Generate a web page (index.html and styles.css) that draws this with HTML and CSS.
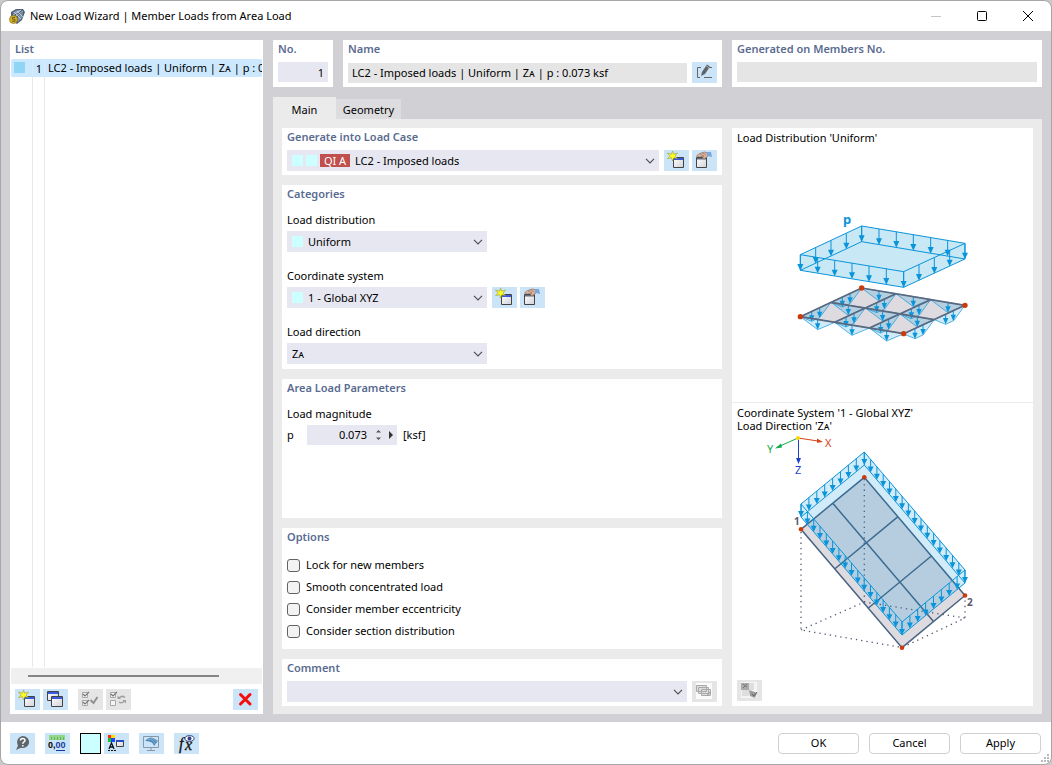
FILE: index.html
```html
<!DOCTYPE html>
<html lang="en">
<head>
<meta charset="utf-8">
<title>New Load Wizard | Member Loads from Area Load</title>
<link rel="stylesheet" href="styles.css">
</head>
<body>
<svg class="defs" aria-hidden="true">
  <defs>
    <linearGradient id="face" x1="0" y1="0" x2="1" y2="1"><stop offset="0" stop-color="#fff"/><stop offset="1" stop-color="#d2d2d8"/></linearGradient>
    <symbol id="i-new" viewBox="0 0 25 21">
      <path d="M9.500 7.500h10v10h-10z" fill="url(#face)" stroke="#444"/>
      <path d="M10 8h9v2h-9z" fill="#3a5ae0"/>
      <path d="M8.500 1l1.200 3.200 3.800-1.200-2.500 3 2.500 2.500-3.600-.8-1.400 3.300-1-3.300-4 1 2.700-2.700-2.700-3 4 1.200z" fill="#ffff1e" stroke="#98983a" stroke-width=".6"/>
    </symbol>
    <symbol id="i-copy" viewBox="0 0 25 21">
      <path d="M4.500 2.500h11v9h-11z" fill="url(#face)" stroke="#444"/><path d="M5 3h10v2H5z" fill="#3a5ae0"/>
      <path d="M8.500 7.500h11v10h-11z" fill="url(#face)" stroke="#444"/><path d="M9 8h10v2H9z" fill="#3a5ae0"/>
    </symbol>
    <symbol id="i-edit" viewBox="0 0 25 21">
      <path d="M4.500 7.500h10v10h-10z" fill="url(#face)" stroke="#444"/><path d="M5 8h9v1.500H5z" fill="#666b80"/>
      <path d="M4.500 6l3-2.500 5-1.500 3.500 1v3l-4 3-1.500-1 1-2-4 1z" fill="#dcb49c" stroke="#8b6f62" stroke-width=".7"/>
      <path d="M8 4l4 2M10.500 3l3.500 2" stroke="#8b6f62" stroke-width=".6"/>
      <path d="M15 2h4l1 5-4.500-1z" fill="#79a7e3"/>
    </symbol>
    <symbol id="chev" viewBox="0 0 10 6"><path d="M1 .8l4 4 4-4" fill="none" stroke="#505058" stroke-width="1.200"/></symbol>
    <marker id="m-long" markerUnits="userSpaceOnUse" viewBox="-10 0 20 50" refX="0" refY="0" markerWidth="20" markerHeight="50" overflow="visible"><path d="M0 0v30" stroke="#0a94da" stroke-width="3"/><path d="M-9 28H9L0 48z" fill="#0a94da"/></marker>
    <marker id="m-mid" markerUnits="userSpaceOnUse" viewBox="-10 0 20 50" refX="0" refY="0" markerWidth="20" markerHeight="50" overflow="visible"><path d="M0 0v14" stroke="#0a94da" stroke-width="3"/><path d="M-8 12H8L0 31z" fill="#0a94da"/></marker>
    <marker id="m-short" markerUnits="userSpaceOnUse" viewBox="-3 0 6 14" refX="0" refY="0" markerWidth="6" markerHeight="14" overflow="visible"><path d="M0 0v9" stroke="#0a94da"/><path d="M-3 7h6L0 13z" fill="#0a94da"/></marker>
    <path id="tri" d="M0 0L52 39 104 17z"/>
    <path id="trap" d="M0 0L-34 46-58 57-92 43z"/>
  </defs>
</svg>

<main class="window">
  <header class="titlebar">
    <svg class="appicon" viewBox="0 0 16 16" aria-hidden="true">
      <path d="M2 4l5-3 7 0 2 3-3 8-5 4-6-4z" fill="#4d6077"/><path d="M3 5l5-3 5 0-5 4zM9 8l5-4-1 6-4 4z" fill="#7f93ab"/><path d="M4 7l8-5M7 8l7-5M8 3l6 6M5 4l7 7" stroke="#c9d4e0" stroke-width=".8"/>
      <circle cx="4.500" cy="11.500" r="4" fill="#d6b22b" stroke="#8c7420" stroke-width=".7"/><path d="M6 9.500H3.500v1.800H6v2H3" fill="none" stroke="#745e13"/>
    </svg>
    <h1>New Load Wizard | Member Loads from Area Load</h1>
    <button class="winbtn" aria-label="Minimize" disabled><svg viewBox="0 0 12 12"><path d="M1 6.500h10" stroke="#c4c4c4"/></svg></button>
    <button class="winbtn" aria-label="Maximize"><svg viewBox="0 0 12 12"><rect x="1.500" y="1.500" width="9" height="9" rx="1" fill="none" stroke="#000"/></svg></button>
    <button class="winbtn" aria-label="Close"><svg viewBox="0 0 12 12"><path d="M1 1l10 10M11 1L1 11" stroke="#000"/></svg></button>
  </header>

  <div class="workspace">
    <section class="card list">
      <h2>List</h2>
      <ul class="rows">
        <li class="row"><span class="cell"><i class="mark"></i></span><span class="cell num">1</span><span class="name">LC2 - Imposed loads | Uniform | Zᴀ | p : 0.073 ksf</span></li>
      </ul>
      <div class="scroll"><div class="thumb"></div></div>
      <div class="tools">
        <button class="tool" aria-label="New"><svg><use href="#i-new"/></svg></button>
        <button class="tool" aria-label="Copy"><svg><use href="#i-copy"/></svg></button>
        <button class="tool spaced" aria-label="Select all" disabled><svg viewBox="0 0 25 21"><path d="M4.500 3.500h5v5h-5zM4.500 11.500h5v5h-5z" fill="#f5f5f5" stroke="#a8a8a8"/><path d="M5 5l2 2 4-4M5 13l2 2 4-4" fill="none" stroke="#777" stroke-width="1.200"/><path d="M12.500 11l3 3 4-6" fill="none" stroke="#909090" stroke-width="2"/></svg></button>
        <button class="tool" aria-label="Invert selection" disabled><svg viewBox="0 0 25 21"><path d="M4.500 3.500h5v5h-5zM4.500 11.500h5v5h-5z" fill="#f5f5f5" stroke="#a8a8a8"/><path d="M5 5l2 2 4-4" fill="none" stroke="#777" stroke-width="1.200"/><path d="M13 9q3-3 6-.5M18.500 12q-3 3-5.500 1" fill="none" stroke="#a0a0a0" stroke-width="1.500"/><path d="M11.500 6.500v3.500h3.500zM20 14.500v-3.500h-3.500z" fill="#a0a0a0"/></svg></button>
        <button class="tool last" aria-label="Delete"><svg viewBox="0 0 25 21"><path d="M7.500 5.500L17 15M17 5.500L7.500 15" stroke="#f50c0c" stroke-width="3" stroke-linecap="round"/></svg></button>
      </div>
    </section>

    <div class="detail">
      <div class="top">
        <section class="card"><h2><label for="no">No.</label></h2><input id="no" class="field right" value="1"></section>
        <section class="card"><h2><label for="name">Name</label></h2>
          <div class="line"><input id="name" class="field gray" readonly value="LC2 - Imposed loads | Uniform | Zᴀ | p : 0.073 ksf">
            <button class="tool" aria-label="Edit name"><svg viewBox="0 0 25 21"><path d="M9 5.500H5.500v10H8M12 15.500h8M17 5.500h3" fill="none" stroke="#666"/><path d="M9 14l1-4 4-6 3 2-4 6z" fill="#5e6468"/><path d="M14.500 3l3 2" stroke="#5e6468" stroke-width="1.500"/></svg></button></div>
        </section>
        <section class="card"><h2><label for="gen">Generated on Members No.</label></h2><input id="gen" class="field gray" readonly></section>
      </div>

      <nav class="tabs"><button class="tab active">Main</button><button class="tab">Geometry</button></nav>

      <div class="page">
        <div class="forms">
          <section class="card"><h2><label for="lc">Generate into Load Case</label></h2>
            <div class="line">
              <div class="combo"><i class="swatch"></i><i class="swatch"></i><span class="badge">QI A</span><select id="lc"><option>LC2 - Imposed loads</option></select><svg class="chev"><use href="#chev"/></svg></div>
              <button class="tool" aria-label="New load case"><svg><use href="#i-new"/></svg></button>
              <button class="tool" aria-label="Edit load case"><svg><use href="#i-edit"/></svg></button>
            </div>
          </section>

          <section class="card"><h2>Categories</h2>
            <div class="stack">
              <div class="item"><label for="dist">Load distribution</label><div class="combo fixed"><i class="swatch wide"></i><select id="dist"><option>Uniform</option></select><svg class="chev"><use href="#chev"/></svg></div></div>
              <div class="item"><label for="cs">Coordinate system</label>
                <div class="line"><div class="combo fixed"><i class="swatch wide"></i><select id="cs"><option>1 - Global XYZ</option></select><svg class="chev"><use href="#chev"/></svg></div>
                <button class="tool" aria-label="New coordinate system"><svg><use href="#i-new"/></svg></button>
                <button class="tool" aria-label="Edit coordinate system"><svg><use href="#i-edit"/></svg></button></div></div>
              <div class="item"><label for="dir">Load direction</label><div class="combo fixed"><select id="dir"><option>Zᴀ</option></select><svg class="chev"><use href="#chev"/></svg></div></div>
            </div>
          </section>

          <section class="card grow"><h2>Area Load Parameters</h2>
            <div class="stack"><div class="item"><span>Load magnitude</span>
              <div class="line param"><label for="p">p</label>
                <div class="spin"><input id="p" value="0.073"><svg viewBox="0 0 18 14" aria-hidden="true"><path d="M0 4.500h5L2.500 2zM0 9.500h5L2.500 12z" fill="#555"/><path d="M13 3v8l4-4z" fill="#333"/></svg></div>
                <span>[ksf]</span></div></div></div>
          </section>

          <section class="card"><h2>Options</h2>
            <div class="checks">
              <label><input type="checkbox">Lock for new members</label>
              <label><input type="checkbox">Smooth concentrated load</label>
              <label><input type="checkbox">Consider member eccentricity</label>
              <label><input type="checkbox">Consider section distribution</label>
            </div>
          </section>

          <section class="card"><h2><label for="com">Comment</label></h2>
            <div class="line"><div class="combo"><select id="com"><option></option></select><svg class="chev"><use href="#chev"/></svg></div>
              <button class="tool" aria-label="Comment library" disabled><svg viewBox="0 0 25 21"><path d="M4 2h16v16H4z" fill="#fafafa"/><path d="M4.500 4.500h10v6h-10zM6.500 6.500h10v6h-10zM9.500 8.500h9v6h-9z" fill="#ddd" stroke="#aaa"/><path d="M15 14.500l3.500-3.500" stroke="#888"/></svg></button></div>
          </section>
        </div>

        <aside class="preview">
          <figure class="pic first">
            <figcaption>Load Distribution 'Uniform'</figcaption>
            <svg class="dist" viewBox="737 205 291 150" role="img" aria-label="Uniform load on plate">
              <g transform="translate(780 205) scale(.3333)" stroke-linejoin="round">
                <path d="M245 63L555 115v47L371 247 61 196v-47z" fill="#c8e8f6"/>
                <g fill="none" stroke="#0a94da" stroke-width="3">
                  <path d="M245 63L555 115 371 200 61 149zM245 110L555 162 371 247 61 196zM245 63v47M555 115v47M371 200v47M61 149v47"/>
                  <path class="long" d="M245 63l52 9 52 8 51 9 52 9 51 8 52 9-46 21-46 22-46 21-46 21-52-9-52-8-51-9-52-8-51-9-52-8 46-21 46-22 46-21"/>
                </g>
                <path d="M245 249L555 301 371 386 61 335z" fill="#dddbe0"/>
                <g fill="#2ba4dc" fill-opacity=".22" stroke="#0a94da" stroke-width="2">
                  <use href="#tri" x="245" y="249"/><use href="#tri" x="348" y="266"/><use href="#tri" x="452" y="284"/>
                  <use href="#tri" x="153" y="292"/><use href="#tri" x="256" y="309"/><use href="#tri" x="360" y="327"/>
                  <use href="#tri" x="61" y="335"/><use href="#tri" x="164" y="352"/><use href="#tri" x="268" y="369"/>
                  <use href="#trap" x="245" y="249"/><use href="#trap" x="348" y="266"/><use href="#trap" x="452" y="284"/><use href="#trap" x="555" y="301"/>
                  <use href="#trap" x="153" y="292"/><use href="#trap" x="256" y="309"/><use href="#trap" x="360" y="327"/><use href="#trap" x="463" y="344"/>
                </g>
                <path class="mid" fill="none" d="M297 257l103 18 104 17M205 300l103 18 104 17M113 343l103 18 104 17M210 265l103 17 104 18 103 17M187 275l103 17 104 18 103 17M119 308l103 17 104 18 103 17M95 319l103 17 104 18 103 17"/>
                <path d="M245 249L555 301 371 386 61 335zM153 292L463 344M348 266L164 352M452 284L268 369" fill="none" stroke="#5a6880" stroke-width="5"/>
                <g fill="#cb3a0a"><circle cx="245" cy="249" r="8"/><circle cx="555" cy="301" r="8"/><circle cx="371" cy="386" r="8"/><circle cx="61" cy="335" r="8"/></g>
              </g>
              <text class="p" x="843" y="224">p</text>
            </svg>
          </figure>
          <figure class="pic second">
            <figcaption>Coordinate System '1 - Global XYZ'<br>Load Direction 'Zᴀ'</figcaption>
            <svg class="coord" viewBox="737 433 291 222" role="img" aria-label="Load in global Z direction">
              <path d="M864.300 477.300L965 595.500 902 647.700 801 529.300z" fill="#dddbe0"/>
              <g fill="none" stroke="#505870" stroke-width="1.300" stroke-dasharray="1.300 4"><path d="M801 532V630L902 647.500 965 618V596M801 630L864.300 602 965 618M864.300 479V602"/></g>
              <path d="M864.300 477.300L965 595.500 902 647.700 801 529.300zM833 503.500L933.500 621.500M898 516.700L834.600 569M931.400 556L868.400 608" fill="none" stroke="#4a6484" stroke-width="1.500"/>
              <path d="M864.300 452L965 570V583L902 635 801 517V504z" fill="#0091da" fill-opacity=".18"/>
              <g fill="none" stroke="#0a94da"><path d="M864.300 452L965 570 902 622 801 504zM864.300 465L965 583 902 635 801 517zM864.300 452v13M965 570v13M902 622v13M801 504v13"/>
                <path class="short" d="M864.300 452l6.300 7.400 6.300 7.300 6.300 7.400 6.300 7.400 6.300 7.400 6.300 7.300 6.300 7.400 6.300 7.400 6.300 7.400 6.300 7.300 6.300 7.400 6.300 7.400 6.300 7.400 6.300 7.300 6.300 7.400 6.200 7.400-7.900 6.500-7.900 6.500-7.800 6.500-7.900 6.500-7.900 6.500-7.900 6.500-7.800 6.500-7.900 6.500-6.300-7.400-6.300-7.400-6.300-7.300-6.300-7.400-6.300-7.400-6.300-7.400-6.400-7.300-6.300-7.400-6.300-7.400-6.300-7.400-6.300-7.300-6.300-7.400-6.300-7.400-6.300-7.400-6.300-7.300-6.400-7.400 7.900-6.500 7.900-6.500 7.900-6.500 7.900-6.500 7.900-6.500 7.900-6.500 7.900-6.500"/></g>
              <g fill="#cb3a0a"><circle cx="864.300" cy="477.300" r="2.300"/><circle cx="965" cy="595.500" r="2.300"/><circle cx="902" cy="647.700" r="2.300"/><circle cx="801" cy="529.300" r="2.300"/></g>
              <path d="M798 438l20 3" stroke="#d8421a"/><path d="M817 438.500l6 3.500-6 .8z" fill="#d8421a"/>
              <path d="M798 438l-18 8" stroke="#14a84c"/><path d="M781 443.500l-6 5 7-1z" fill="#14a84c"/>
              <path d="M798.500 438v20" stroke="#1c3fc8"/><path d="M796 458h5l-2.500 6z" fill="#1c3fc8"/><circle cx="798" cy="438" r="2" fill="#ffd800"/>
              <text class="axis x" x="825" y="447">X</text><text class="axis y" x="767" y="453">Y</text><text class="axis z" x="795" y="474">Z</text>
              <text class="node" x="794" y="525">1</text><text class="node" x="967" y="606">2</text>
            </svg>
            <button class="tool" aria-label="Switch picture" disabled><svg viewBox="0 0 25 21"><path d="M4 2h16v16H4z" fill="#f4f4f4"/><path d="M4 3h8v7H4z" fill="#aaa"/><path d="M12 3h5v7h-5zM5 10h7v6H5z" fill="#dedede"/><path d="M6 4l4 3M10 4L6 8" stroke="#777"/><path d="M12 10l3 1 5 2-2 5-5-2z" fill="#9a9a9a"/><path d="M15 14l2 2 3-4" fill="none" stroke="#666"/></svg></button>
          </figure>
        </aside>
      </div>
    </div>
  </div>

  <footer class="footer">
    <button class="tool" aria-label="Help"><svg viewBox="0 0 25 21"><path d="M12.500 3a6.500 6 0 1 1-1.500 11.800L6 17l2-4.500A6.300 6.300 0 0 1 12.500 3z" fill="#5f666b"/><path d="M10.500 7.500q0-2 2.200-2t2.300 1.800q0 1.200-1.300 1.800-.9.500-.9 1.700M12.800 12v1.600" fill="none" stroke="#fff" stroke-width="1.500"/></svg></button>
    <button class="tool" aria-label="Units"><svg viewBox="0 0 25 21"><path d="M4 2h16v5H4z" fill="#93d88a"/><path d="M6.500 4v3M9.500 4v3M12.500 4v3M15.500 4v3M18.500 4v3" stroke="#5da858" stroke-width=".8"/><text class="digits" x="3" y="15">0,<tspan fill="#153c9c">00</tspan></text><path d="M11 17.500h9" stroke="#153c9c"/></svg></button>
    <button class="color" aria-label="Color"></button>
    <button class="tool tight" aria-label="Display properties"><svg viewBox="0 0 25 21"><path d="M4 2h3v3H4z" fill="#f22"/><path d="M7 2h4v3H7z" fill="#fd0"/><path d="M4 5h3v4H4z" fill="#13c22e"/><path d="M7 5h4v4H7z" fill="#24f"/><path d="M5 16l2.500-6 2.500 6M6 14h3" fill="none" stroke="#111" stroke-width="1.300"/><path d="M4 17.500h8" stroke="#111" stroke-dasharray="2 1"/><path d="M12.500 7.500h7v6h-7z" fill="url(#face)" stroke="#444"/><path d="M12 7h8v2h-8z" fill="#2b4bbb"/></svg></button>
    <button class="tool" aria-label="View"><svg viewBox="0 0 25 21"><path d="M4.500 3.500h15v11h-15zM12 14.500v3M8 17.500h8" fill="none" stroke="#8798a8"/><path d="M6 8q5-6 10-2l3 2-4 5q-1-5-9-5z" fill="#4f86b8"/><path d="M9 6q5 0 7 5M12 5q3 1 6 4" fill="none" stroke="#9cc4e2" stroke-width=".7"/></svg></button>
    <button class="tool" aria-label="Formula"><svg viewBox="0 0 25 21"><text class="fx" x="5" y="16">f</text><text class="fx" x="11" y="17">x</text><ellipse cx="15.500" cy="5.500" rx="4.500" ry="2.800" fill="#fff" stroke="#28356c"/><circle cx="15.500" cy="5.500" r="2" fill="#34408c"/></svg></button>
    <div class="actions"><button class="push">OK</button><button class="push">Cancel</button><button class="push">Apply</button></div>
    <svg class="grip" viewBox="0 0 9 9" aria-hidden="true"><path d="M6 0h2v2H6zM3 3h2v2H3zM6 3h2v2H6zM0 6h2v2H0zM3 6h2v2H3zM6 6h2v2H6z" fill="#b9b9b9"/></svg>
  </footer>
</main>
</body>
</html>
```
FILE: styles.css
```css
* { box-sizing: border-box; }
body { margin: 0; background: #c9c9c9; color: #000; font: 11px/16px "Noto Sans", "Open Sans", sans-serif; }
h1, h2, ul, figure { margin: 0; padding: 0; }
button, input, select { font: inherit; color: inherit; margin: 0; padding: 0; border: 0; background: none; }
svg { display: block; flex: none; }
.defs { position: absolute; width: 0; height: 0; }

.window { display: flex; flex-direction: column; min-height: 100vh; border: 1px solid #a6a6a6; border-radius: 8px; background: #fff; overflow: hidden; }
.titlebar { display: flex; align-items: center; height: 30px; padding-left: 8px; }
.titlebar h1 { flex: 1; margin-left: 5px; font-size: 11px; font-weight: 400; }
.appicon { width: 16px; height: 16px; }
.winbtn { display: grid; place-items: center; width: 46px; height: 30px; }
.winbtn svg { width: 12px; height: 12px; }

.workspace { flex: 1; display: grid; grid-template-columns: 253px 1fr; gap: 10px; padding: 9px 9px 8px; background: #d1d0d5; }
.card { min-width: 0; padding: 0 5px 4px; background: #fff; }
h2 { height: 18px; margin-bottom: 4px; font-size: 11px; line-height: 18px; font-weight: 600; color: #5a6b91; white-space: nowrap; }

.list { display: flex; flex-direction: column; padding: 0 1px 4px; }
.list h2 { margin: 0 4px 1px; }
.rows { flex: 1; list-style: none; background: linear-gradient(#e8e8e8, #e8e8e8) 21px 0 / 1px 100% no-repeat, linear-gradient(#e8e8e8, #e8e8e8) 33px 0 / 1px 100% no-repeat; }
.row { display: flex; align-items: center; height: 18px; padding-left: 3px; border-radius: 2px; background: #cce8ff; white-space: nowrap; overflow: hidden; }
.cell { flex: none; width: 19px; height: 18px; border-right: 1px solid #dbeaf5; }
.cell.num { width: 12px; padding-right: 2px; line-height: 20px; text-align: right; }
.name { padding-left: 3px; line-height: 20px; }
.mark { display: block; width: 11px; height: 11px; margin-top: 3px; background: #8fd6f5; }
.scroll { display: flex; align-items: center; height: 16px; margin-top: 1px; padding: 0 43px 0 17px; background: #f0f0f0; }
.thumb { flex: 1; height: 2px; background: #858585; }
.tools { display: flex; gap: 3px; margin: 5px 4px 0; }
.tool { flex: none; width: 25px; height: 21px; background: #cce4f7; }
.tool:disabled { background: #e5e5e5; }
.tool svg { width: 25px; height: 21px; }
.spaced { margin-left: 7px; }
.last { margin-left: auto; }

.detail { display: flex; flex-direction: column; min-width: 0; }
.top { display: grid; grid-template-columns: 60px 1fr 310px; gap: 10px; }
.line { display: flex; align-items: center; gap: 3px; }
.field { display: block; width: 100%; height: 20px; padding: 0 4px; background: #e7e7f1; }
.field.gray { background: #e5e5e5; }
.field.right { text-align: right; }
.line > .field { flex: 1; min-width: 0; margin-right: 2px; }
.top .card { height: 47px; }

.tabs { display: flex; align-items: flex-end; height: 22px; margin-top: 10px; }
.tab { height: 20px; width: 65px; padding-top: 2px; background: #dddde0; }
.tab.active { width: 63px; height: 22px; padding-top: 4px; background: #ebebeb; }

.page { flex: 1; display: grid; grid-template-columns: 1fr 301px; gap: 10px; padding: 9px 9px 8px; background: #ebebeb; }
.forms { display: flex; flex-direction: column; gap: 10px; min-width: 0; }
.grow { flex: 1; }
.combo { display: flex; align-items: center; flex: 1; height: 21px; padding: 0 4px 0 5px; background: #e7e7f1; }
.combo.fixed { flex: none; width: 200px; }
.line > .combo { margin-right: 2px; }
.combo select { flex: 1; min-width: 0; height: 21px; appearance: none; outline: 0; }
.chev { width: 10px; height: 6px; }
.swatch { width: 11px; height: 11px; margin-right: 3px; background: #ccffff; }
.swatch.wide { margin-right: 5px; }
.badge { width: 30px; height: 13px; margin-right: 5px; background: #c0504d; color: #fff; line-height: 14px; text-align: center; }
.stack { display: flex; flex-direction: column; gap: 16px; padding: 5px 0 1px; }
.item { display: grid; gap: 3px; }
.param { gap: 6px; }
.param label { width: 14px; }
.spin { display: flex; align-items: center; width: 90px; height: 20px; padding-right: 3px; background: #e7e7f1; }
.spin input { flex: 1; min-width: 0; margin-right: 9px; text-align: right; }
.spin svg { width: 18px; height: 14px; }
.checks { padding: 4px 0 3px; }
.checks label { display: flex; align-items: center; gap: 6px; height: 22px; }
.checks input { width: 13px; height: 13px; appearance: none; border: 1px solid #626262; border-radius: 3px; background: #f3f3f3; }

.preview { display: grid; grid-template-rows: 275fr 303fr; background: #fff; }
.pic { display: flex; flex-direction: column; padding: 2px 5px 0; line-height: 16px; }
.first { border-bottom: 1px solid #ebebeb; }
.pic > svg { align-self: center; width: 291px; }
.dist { height: 150px; margin-top: 59px; }
.second { padding: 3px 5px 5px; line-height: 13px; }
.coord { height: 222px; margin-top: 1px; }
.second .tool { margin-top: auto; }
.long { marker: url(#m-long); stroke: none; }
.mid { marker: url(#m-mid); }
.short { marker: url(#m-short); stroke: none; }
.p { font: 700 13px "Noto Sans", sans-serif; fill: #0a94da; }
.axis { font-size: 11px; }
.x { fill: #d8421a; }
.y { fill: #14a84c; }
.z { fill: #1c3fc8; }
.node { font: 700 10px "Noto Sans", sans-serif; fill: #59596b; }
.digits { font: 700 9px "Liberation Sans", sans-serif; }
.fx { font: italic 16px "Liberation Serif", serif; fill: #111; stroke: #111; stroke-width: 0.3px; }

.footer { display: flex; align-items: center; height: 42px; padding: 0 1px 0 9px; gap: 10px; }
.color { width: 21px; height: 21px; border: 1px solid #000; background: #ccffff; }
.tight { margin-left: -7px; }
.actions { display: flex; gap: 10px; margin: 0 9px 0 auto; }
.push { width: 81px; height: 21px; border: 1px solid #d0d0d0; border-radius: 4px; background: #fff; }
.grip { align-self: flex-end; width: 9px; height: 9px; margin: 0 0 1px -19px; }
```
